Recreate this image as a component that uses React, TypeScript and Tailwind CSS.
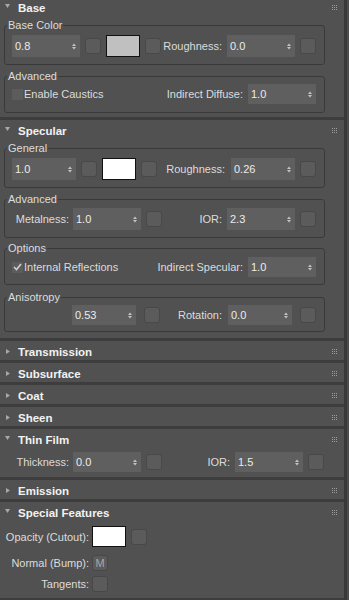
import React from "react";

const Grip = () => (
  <svg width="5" height="5" viewBox="0 0 5 5" className="block">
    {[0, 2, 4].map((y) =>
      [0, 2, 4].map((x) => (
        <rect key={`${x}-${y}`} x={x} y={y} width="1" height="1" fill="#9c9c9c" />
      ))
    )}
  </svg>
);

function Header({ title, open, h }: { title: string; open: boolean; h: string }) {
  return (
    <div className={`flex items-start ${h}`}>
      <div className="w-[18px] shrink-0">
        {open ? (
          <svg width="5" height="4" viewBox="0 0 5 4" className="ml-[5px] mt-[7px] block">
            <path d="M0 0 L5 0 L2.5 4 Z" fill="#a8a8a8" />
          </svg>
        ) : (
          <svg width="4" height="5" viewBox="0 0 4 5" className="ml-[6px] mt-[8px] block">
            <path d="M0 0 L4 2.5 L0 5 Z" fill="#a8a8a8" />
          </svg>
        )}
      </div>
      <span className="pt-[3px] text-[11.5px] font-bold leading-[16px] text-[#f2f2f2]">{title}</span>
      <div className="ml-auto mr-[7px] mt-[8px]">
        <Grip />
      </div>
    </div>
  );
}

function Spinner({ value, w, h = "h-[22px]", className = "" }: { value: string; w: string; h?: string; className?: string }) {
  return (
    <div className={`flex shrink-0 items-center bg-[#5f5f5f] pl-[3px] pr-[4px] ${h} ${w} ${className}`}>
      <span className="text-[11px] leading-[14px] text-[#ececec]">{value}</span>
      <svg width="4" height="7" viewBox="0 0 4 7" className="ml-auto block">
        <path d="M0 3 L2 0.5 L4 3 Z" fill="#c4c4c4" />
        <path d="M0 4 L4 4 L2 6.5 Z" fill="#c4c4c4" />
      </svg>
    </div>
  );
}

function Btn({ className = "", children }: { className?: string; children?: React.ReactNode }) {
  return (
    <div
      className={`flex h-[16px] w-[16px] shrink-0 items-center justify-center rounded-[3px] border border-[#484848] bg-[#5b5b5b] text-[11px] leading-[12px] text-[#a8a8a8] ${className}`}
    >
      {children}
    </div>
  );
}

function Swatch({ color, h = "h-[22px]", className = "" }: { color: string; h?: string; className?: string }) {
  return <div className={`w-[34px] shrink-0 border border-[#111111] ${h} ${color} ${className}`} />;
}

function Check({ checked }: { checked?: boolean }) {
  return (
    <div className="flex h-[11px] w-[11px] shrink-0 items-center justify-center bg-[#5c5c5c]">
      {checked && (
        <svg width="9" height="8" viewBox="0 0 9 8" className="block">
          <path d="M1 4 L3.5 6.5 L8 1" stroke="#d0d0d0" strokeWidth="1.6" fill="none" />
        </svg>
      )}
    </div>
  );
}

function Label({ children, className = "" }: { children: React.ReactNode; className?: string }) {
  return <span className={`whitespace-nowrap text-[11px] leading-[14px] text-[#dcdcdc] ${className}`}>{children}</span>;
}

function Group({
  label,
  className = "",
  inner = "",
  children,
}: {
  label: string;
  className?: string;
  inner?: string;
  children: React.ReactNode;
}) {
  return (
    <fieldset className={`ml-[4px] w-[321px] rounded-[3px] border border-[#3a3a3a] px-[2px] ${className}`}>
      <legend className="px-[1px] text-[11px] leading-[12px] text-[#dcdcdc]">{label}</legend>
      <div className={`flex items-center pl-[5px] pr-[6px] ${inner}`}>{children}</div>
    </fieldset>
  );
}

function Collapsed({ title }: { title: string }) {
  return (
    <div className="h-[19px] shrink-0 bg-[#515151]">
      <Header title={title} open={false} h="h-[19px]" />
    </div>
  );
}

export default function App() {
  return (
    <div className="flex h-[600px] w-[349px] overflow-hidden bg-[#3d3d3d] font-['Liberation_Sans',Arial,sans-serif] text-[11px] leading-[14px]">
      <div className="flex w-[344px] shrink-0 flex-col gap-[3px]">
        {/* Base */}
        <div className="mt-[-3px] shrink-0 bg-[#515151] pb-[4px]">
          <Header title="Base" open h="h-[22px]" />
          <Group label="Base Color" inner="pt-[4px] pb-[7px]">
            <Spinner value="0.8" w="w-[68px]" />
            <Btn className="ml-[5px]" />
            <Swatch color="bg-[#c0c0c0]" className="ml-[5px]" />
            <Btn className="ml-[5px]" />
            <div className="ml-auto flex items-center">
              <Label>Roughness:</Label>
              <Spinner value="0.0" w="w-[68px]" className="ml-[5px]" />
              <Btn className="ml-[5px]" />
            </div>
          </Group>
          <Group label="Advanced" className="mt-[5px]" inner="pt-[2px] pb-[8px]">
            <Check />
            <Label className="ml-[1px]">Enable Caustics</Label>
            <div className="ml-auto flex items-center">
              <Label>Indirect Diffuse:</Label>
              <Spinner value="1.0" w="w-[68px]" h="h-[20px]" className="ml-[5px]" />
            </div>
          </Group>
        </div>

        {/* Specular */}
        <div className="shrink-0 bg-[#515151] pb-[6px]">
          <Header title="Specular" open h="h-[22px]" />
          <Group label="General" inner="pt-[4px] pb-[7px]">
            <Spinner value="1.0" w="w-[64px]" />
            <Btn className="ml-[5px]" />
            <Swatch color="bg-white" className="ml-[5px]" />
            <Btn className="ml-[5px]" />
            <div className="ml-auto flex items-center">
              <Label>Roughness:</Label>
              <Spinner value="0.26" w="w-[64px]" className="ml-[6px]" />
              <Btn className="ml-[5px]" />
            </div>
          </Group>
          <Group label="Advanced" className="mt-[5px]" inner="pt-[3px] pb-[7px]">
            <div className="w-[61px] shrink-0 pr-[4px] text-right">
              <Label>Metalness:</Label>
            </div>
            <Spinner value="1.0" w="w-[68px]" />
            <Btn className="ml-[5px]" />
            <div className="ml-auto flex items-center">
              <Label>IOR:</Label>
              <Spinner value="2.3" w="w-[68px]" className="ml-[5px]" />
              <Btn className="ml-[5px]" />
            </div>
          </Group>
          <Group label="Options" className="mt-[4px]" inner="pt-[3px] pb-[7px]">
            <Check checked />
            <Label className="ml-[1px]">Internal Reflections</Label>
            <div className="ml-auto flex items-center">
              <Label>Indirect Specular:</Label>
              <Spinner value="1.0" w="w-[68px]" h="h-[20px]" className="ml-[5px]" />
            </div>
          </Group>
          <Group label="Anisotropy" className="mt-[6px]" inner="pt-[2px] pb-[6px]">
            <Spinner value="0.53" w="w-[64px]" h="h-[20px]" className="ml-[60px]" />
            <Btn className="ml-[8px]" />
            <div className="ml-auto flex items-center">
              <Label>Rotation:</Label>
              <Spinner value="0.0" w="w-[64px]" h="h-[20px]" className="ml-[6px]" />
              <Btn className="ml-[8px]" />
            </div>
          </Group>
        </div>

        <Collapsed title="Transmission" />
        <Collapsed title="Subsurface" />
        <Collapsed title="Coat" />
        <Collapsed title="Sheen" />

        {/* Thin Film */}
        <div className="shrink-0 bg-[#515151] pb-[5px]">
          <Header title="Thin Film" open h="h-[22px]" />
          <div className="flex items-center pr-[20px] pt-[1px]">
            <div className="w-[73px] shrink-0 pr-[4px] text-right">
              <Label>Thickness:</Label>
            </div>
            <Spinner value="0.0" w="w-[68px]" h="h-[20px]" />
            <Btn className="ml-[5px]" />
            <div className="ml-auto flex items-center">
              <Label>IOR:</Label>
              <Spinner value="1.5" w="w-[68px]" h="h-[20px]" className="ml-[5px]" />
              <Btn className="ml-[5px]" />
            </div>
          </div>
        </div>

        <Collapsed title="Emission" />

        {/* Special Features */}
        <div className="shrink-0 bg-[#515151] pb-[6px]">
          <Header title="Special Features" open h="h-[22px]" />
          <div className="flex flex-col pt-[2px]">
            <div className="flex h-[21px] items-center">
              <div className="w-[89px] shrink-0 text-right">
                <Label>Opacity (Cutout):</Label>
              </div>
              <Swatch color="bg-white" h="h-[21px]" className="ml-[3px]" />
              <Btn className="ml-[5px]" />
            </div>
            <div className="mt-[8px] flex h-[16px] items-center">
              <div className="w-[89px] shrink-0 text-right">
                <Label>Normal (Bump):</Label>
              </div>
              <Btn className="ml-[3px]">M</Btn>
            </div>
            <div className="mt-[5px] flex h-[16px] items-center">
              <div className="w-[89px] shrink-0 text-right">
                <Label>Tangents:</Label>
              </div>
              <Btn className="ml-[3px]" />
            </div>
          </div>
        </div>
      </div>
      <div className="flex w-[5px] shrink-0">
        <div className="w-[3px] bg-[#393939]" />
        <div className="w-[2px] bg-[#4c4c4c]" />
      </div>
    </div>
  );
}
